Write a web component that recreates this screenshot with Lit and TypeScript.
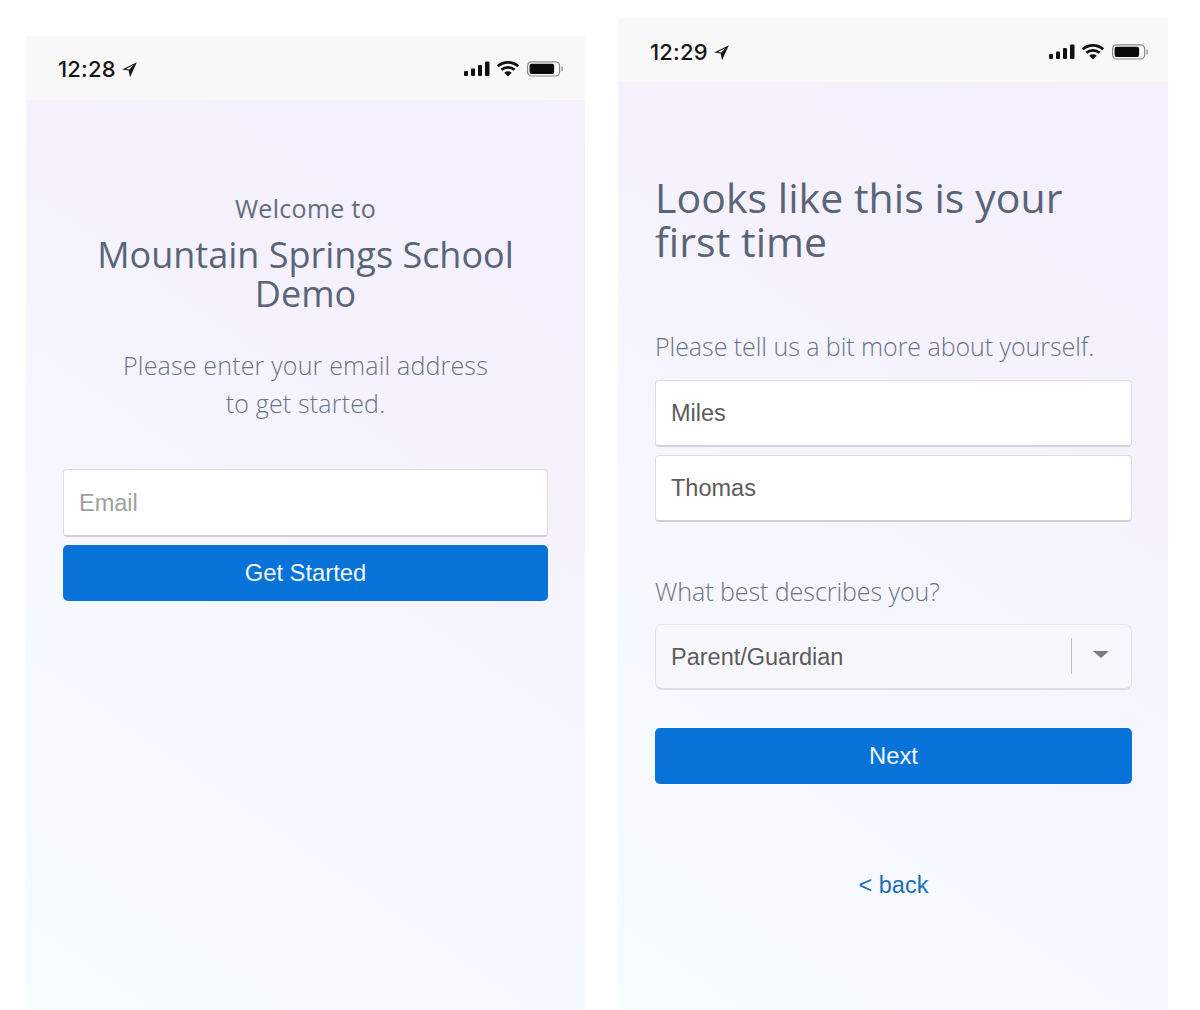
import { LitElement, html, css, svg } from "lit";
import { customElement } from "lit/decorators.js";

const statusIcons = html`
  <svg class="icons" width="100" height="20" viewBox="0 0 100 20" aria-hidden="true">
    <rect x="0" y="12" width="4" height="5" rx="1" fill="#111"/>
    <rect x="7" y="9.5" width="4" height="7.5" rx="1" fill="#111"/>
    <rect x="14" y="6" width="4" height="11" rx="1" fill="#111"/>
    <rect x="21" y="2.5" width="4.5" height="14.5" rx="1" fill="#111"/>
    ${svg`<g fill="none" stroke="#111" stroke-width="2.7">
      <path d="M33.8 7.2a15.4 15.4 0 0 1 20.4 0"/>
      <path d="M37.4 10.8a10 10 0 0 1 13.2 0"/>
    </g>
    <path d="M40.3 13.8a5.4 5.4 0 0 1 7.4 0l-3.7 3.8z" fill="#111"/>`}
    <rect x="63.6" y="2.8" width="32" height="14.2" rx="4" fill="none" stroke="#8a8a8a" stroke-width="1.2"/>
    <rect x="65.6" y="4.8" width="24.5" height="10.2" rx="2" fill="#0a0a0a"/>
    <rect x="97.4" y="7.6" width="1.4" height="4.8" rx="0.7" fill="#999"/>
  </svg>`;

const arrow = html`<svg class="arrow" width="17" height="17" viewBox="0 0 15 15" aria-hidden="true">
  <path d="M14 1 L1 7.4 L6.7 8.4 L8 14.4 Z M11.2 3.6 L7.2 7.6 L4.4 7.1 Z" fill="#1a1a1a" fill-rule="evenodd"/>
</svg>`;

@customElement("app-root")
export class AppRoot extends LitElement {
  static styles = css`
    :host {
      display: flex;
      align-items: flex-end;
      width: 1200px;
      height: 1010px;
      padding: 0 32px 1px 26px;
      box-sizing: border-box;
      background: #fff;
      justify-content: space-between;
      font-family: "Open Sans", sans-serif;
      overflow: hidden;
    }
    .phone {
      display: flex;
      flex-direction: column;
      background: linear-gradient(215deg, #f3effd 0%, #f5f2fe 35%, #f6f7ff 65%, #f6fcff 100%);
    }
    .left { width: 559px; height: 973px; }
    .right { width: 550px; height: 991px; }
    .status {
      height: 64px;
      flex: none;
      background: #f8f8f8;
      display: flex;
      align-items: center;
      justify-content: space-between;
      box-sizing: border-box;
    }
    .left .status { padding: 2px 21px 0 32px; }
    .right .status { padding: 4px 19px 0 32px; }
    .time {
      display: flex;
      align-items: center;
      gap: 5px;
      font: 500 22px "Inter", "Liberation Sans", sans-serif;
      color: #151515;
      letter-spacing: 0.2px;
    }
    .icons { display: block; }
    .content { display: flex; flex-direction: column; flex: 1; }
    .left .content { padding: 91px 37px 0; align-items: stretch; text-align: center; }
    .right .content { padding: 93px 36px 0 37px; }
    .welcome { font-size: 25px; line-height: 34px; color: #636c80; letter-spacing: 0.3px; }
    .school { font-size: 36px; line-height: 39px; color: #5a6479; margin-top: 10px; }
    .lead { font-size: 25px; font-weight: 300; line-height: 37.5px; color: #6a7386; margin-top: 34px; letter-spacing: 0.17px; }
    .h1 { font-size: 41px; line-height: 44px; color: #5a6479; letter-spacing: 0.05px; }
    .ask { font-size: 25px; font-weight: 300; line-height: 34px; color: #6a7386; letter-spacing: -0.05px; }
    .ask.one { margin-top: 66px; }
    .ask.two { margin-top: 52px; }
    .field {
      box-sizing: border-box;
      background: #fff;
      border: 1px solid #dcdce2;
      border-bottom: 2px solid #d0d0d8;
      border-radius: 4px;
      display: flex;
      align-items: center;
      padding: 0 15px;
      font: 23.5px "Liberation Sans", sans-serif;
      color: #5c5c5c;
    }
    .left .field { height: 68px; margin-top: 47px; color: #a0a0a0; padding-top: 2px; }
    .right .field { height: 67px; }
    .right .field.first { margin-top: 17px; }
    .right .field.second { margin-top: 8px; }
    .right .field.select {
      margin-top: 16px;
      height: 66px;
      background: #f8f7fe;
      border: 1.5px solid #e4e3ec;
      border-bottom: 2px solid #dedde6;
      border-radius: 7px;
      padding: 2px 15px 0;
      justify-content: space-between;
    }
    .chev { display: flex; align-items: center; height: 36px; margin-top: -4px; border-left: 1px solid #bcbcc4; padding-left: 21px; margin-right: 7px; }
    .tri { width: 0; height: 0; margin-top: -2px; border-left: 8px solid transparent; border-right: 8px solid transparent; border-top: 7px solid #7a7a80; }
    .btn {
      box-sizing: border-box;
      background: #0773d9;
      color: #f2f8ff;
      border-radius: 5px;
      display: flex;
      align-items: center;
      justify-content: center;
      font: 23.8px "Liberation Sans", sans-serif;
    }
    .left .btn { height: 56px; margin-top: 8px; }
    .right .btn { height: 56px; margin-top: 38px; }
    .back {
      text-align: center;
      font: 23.5px "Liberation Sans", sans-serif;
      color: #1a6fb9;
      margin-top: 88px;
    }
  `;

  render() {
    return html`
      <section class="phone left">
        <div class="status">
          <div class="time">12:28 ${arrow}</div>
          ${statusIcons}
        </div>
        <div class="content">
          <div class="welcome">Welcome to</div>
          <div class="school">Mountain Springs School<br />Demo</div>
          <div class="lead">Please enter your email address<br />to get started.</div>
          <div class="field">Email</div>
          <div class="btn">Get Started</div>
        </div>
      </section>
      <section class="phone right">
        <div class="status">
          <div class="time">12:29 ${arrow}</div>
          ${statusIcons}
        </div>
        <div class="content">
          <div class="h1">Looks like this is your<br />first time</div>
          <div class="ask one">Please tell us a bit more about yourself.</div>
          <div class="field first">Miles</div>
          <div class="field second">Thomas</div>
          <div class="ask two">What best describes you?</div>
          <div class="field select">
            <span>Parent/Guardian</span>
            <span class="chev"><span class="tri"></span></span>
          </div>
          <div class="btn">Next</div>
          <div class="back">&lt; back</div>
        </div>
      </section>
    `;
  }
}
